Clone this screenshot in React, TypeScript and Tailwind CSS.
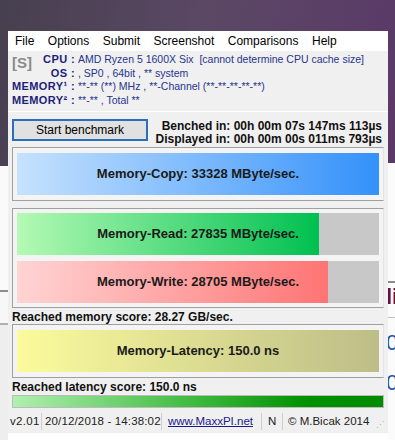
import React from "react";

const F = { fontFamily: '"Liberation Sans", Arial, sans-serif' };

function Bar({ label, pct, from, to }: { label: string; pct: number; from: string; to: string }) {
  return (
    <div className="relative h-[42px] w-full shrink-0 bg-[#c8c8c8]">
      <div className="absolute left-0 top-0 bottom-0" style={{ width: `${pct}%`, background: `linear-gradient(to right, ${from}, ${to})` }} />
      <div className="relative flex h-full items-center justify-center text-[13px] font-bold text-[#1a1a1a]">{label}</div>
    </div>
  );
}

function Group({ children, py }: { children: React.ReactNode; py: string }) {
  return (
    <div className={`mx-[4px] flex flex-col gap-[6px] border border-[#a0a0a0] border-r-[#e4e4e4] bg-[#f4f4f4] px-[4px] ${py}`}>
      {children}
    </div>
  );
}

function Sep() {
  return <span className="h-[17px] w-[1px] shrink-0 bg-[#cfcfcf]" />;
}

export default function App() {
  return (
    <div className="relative h-[440px] w-[395px] overflow-hidden" style={F}>
      {/* desktop wallpaper */}
      <div className="absolute inset-0 bg-[linear-gradient(100deg,#47404f_0%,#5b4865_45%,#5a3568_100%)]" />
      {/* background windows (left) */}
      <div className="absolute left-0 top-[166px] h-[124px] w-[10px] bg-[#fafafa]" />
      <div className="absolute left-0 top-[290px] h-[2px] w-[10px] bg-[#8c8c8c]" />
      <div className="absolute left-0 top-[292px] h-[31px] w-[10px] bg-[#f7f7f7]" />
      <div className="absolute left-0 top-[323px] h-[2px] w-[10px] bg-[#b0b0b0]" />
      <div className="absolute left-0 top-[325px] h-[115px] w-[10px] bg-[#eeeeee]" />
      {/* background windows (right) */}
      <div className="absolute right-0 top-[163px] h-[277px] w-[10px] overflow-hidden bg-[#fbfbfb]">
        <div className="absolute left-0 top-[118px] h-[2px] w-full bg-[#8c8c8c]" />
        <div className="absolute left-0 top-[154px] h-[1px] w-full bg-[#c0c0c0]" />
        <div className="absolute left-[1px] top-[123px] text-[22px] font-bold leading-none text-[#6a1038]">li</div>
        <div className="absolute left-[1px] top-[169px] text-[22px] leading-none text-[#2050a0]">0</div>
        <div className="absolute left-[1px] top-[209px] text-[22px] leading-none text-[#2050a0]">0</div>
      </div>

      {/* main window */}
      <div className="absolute left-[8px] top-[31px] flex h-[409px] w-[380px] flex-col bg-[#f0f0f0]">
        {/* menu */}
        <div className="flex h-[20px] shrink-0 items-center gap-[13.5px] bg-white pl-[7px] text-[12px] text-black">
          <span>File</span>
          <span>Options</span>
          <span>Submit</span>
          <span>Screenshot</span>
          <span>Comparisons</span>
          <span>Help</span>
        </div>
        {/* info */}
        <div className="relative flex h-[60px] shrink-0 flex-col pt-[2px] text-[10.5px] leading-[13.5px] text-[#27348f]">
          <div className="absolute left-[4px] top-[5px] text-[15px] font-bold text-[#8a8a8a]">[S]</div>
          <div className="flex"><span className="w-[70px] shrink-0 pr-[3px] text-right text-[11px] font-bold tracking-[0.4px] text-[#1c237a]">CPU :</span><span>AMD Ryzen 5 1600X Six&nbsp;&nbsp;[cannot determine CPU cache size]</span></div>
          <div className="flex"><span className="w-[70px] shrink-0 pr-[3px] text-right text-[11px] font-bold tracking-[0.4px] text-[#1c237a]">OS :</span><span>, SP0 , 64bit , ** system</span></div>
          <div className="flex"><span className="w-[70px] shrink-0 pr-[3px] text-right text-[11px] font-bold tracking-[0.4px] text-[#1c237a]">MEMORY¹ :</span><span>**-** (**) MHz , **-Channel (**-**-**-**-**)</span></div>
          <div className="flex"><span className="w-[70px] shrink-0 pr-[3px] text-right text-[11px] font-bold tracking-[0.4px] text-[#1c237a]">MEMORY² :</span><span>**-** , Total **</span></div>
        </div>
        <div className="h-[1px] shrink-0 bg-white" />
        {/* button row */}
        <div className="flex h-[35px] shrink-0 items-start justify-between pl-[4px] pr-[6px] pt-[7px]">
          <div className="flex h-[22px] w-[136px] items-center justify-center border-2 border-[#2a6fb8] bg-[#e1e1e1] text-[12px] text-black">Start benchmark</div>
          <div className="mt-[1px] flex flex-col items-end text-[12px] font-bold leading-[12.5px] text-[#111]">
            <span>Benched in: 00h 00m 07s 147ms 113µs</span>
            <span>Displayed in: 00h 00m 00s 011ms 793µs</span>
          </div>
        </div>
        <Group py="py-[5px]">
          <Bar label="Memory-Copy: 33328 MByte/sec." pct={100} from="#c6e2fe" to="#3391fb" />
        </Group>
        <div className="mt-[7px]">
          <Group py="py-[4px]">
            <Bar label="Memory-Read: 27835 MByte/sec." pct={83.4} from="#b4fab4" to="#00c050" />
            <Bar label="Memory-Write: 28705 MByte/sec." pct={86.0} from="#ffd4d4" to="#ff7474" />
          </Group>
        </div>
        <div className="flex h-[16px] shrink-0 items-center px-[4px] pt-[1px] text-[12px] font-bold text-[#111]">Reached memory score: 28.27 GB/sec.</div>
        <Group py="py-[5px]">
          <Bar label="Memory-Latency: 150.0 ns" pct={100} from="#fbfb9c" to="#bdbd88" />
        </Group>
        <div className="flex h-[17px] shrink-0 items-center px-[4px] pt-[1px] text-[12px] font-bold text-[#111]">Reached latency score: 150.0 ns</div>
        <div className="mx-[4px] h-[13px] shrink-0 border border-[#bcbcbc] bg-[linear-gradient(to_right,#b0f0b0,#3cb83c_50%,#009000_80%,#008c00)]" />
        {/* status bar */}
        <div className="mt-[2px] flex h-[23px] shrink-0 items-center whitespace-nowrap text-[11.5px] text-[#222]">
          <span className="w-[33px] shrink-0 pl-[2px] tracking-[0.3px]">v2.01</span>
          <Sep />
          <span className="w-[119px] shrink-0 pl-[3px] tracking-[0.15px]">20/12/2018 - 14:38:02</span>
          <Sep />
          <span className="w-[99px] shrink-0 pl-[6px]"><span className="text-[#1a1a8c] underline">www.MaxxPI.net</span></span>
          <Sep />
          <span className="w-[20px] shrink-0 pl-[6px]">N</span>
          <Sep />
          <span className="shrink-0 pl-[5px]">© M.Bicak 2014</span>
          <span className="ml-auto mr-[3px] self-end pb-[3px] text-[9px] leading-none text-[#b0b0b0]">⋰</span>
        </div>
        <div className="flex-1 bg-white" />
      </div>
    </div>
  );
}
